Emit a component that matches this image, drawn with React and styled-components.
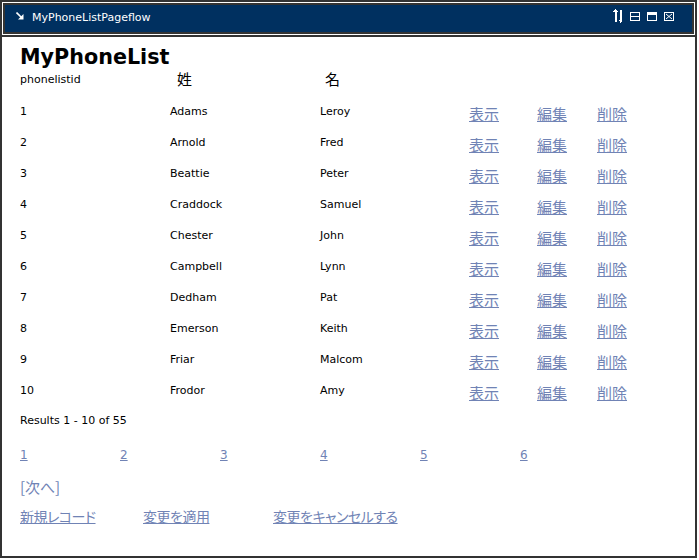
import React from 'react';
import styled, { createGlobalStyle } from 'styled-components';

const LINK = '#7083b5';
const CJK = '"Noto Sans CJK JP", "DejaVu Sans", sans-serif';

const GlobalStyle = createGlobalStyle`
  html, body { margin: 0; padding: 0; background: #fff; }
  body { font-family: "DejaVu Sans", "Noto Sans CJK JP", sans-serif; color: #000; }
`;

const people = [
  [1, 'Adams', 'Leroy'],
  [2, 'Arnold', 'Fred'],
  [3, 'Beattie', 'Peter'],
  [4, 'Craddock', 'Samuel'],
  [5, 'Chester', 'John'],
  [6, 'Campbell', 'Lynn'],
  [7, 'Dedham', 'Pat'],
  [8, 'Emerson', 'Keith'],
  [9, 'Friar', 'Malcom'],
  [10, 'Frodor', 'Amy'],
];

// --- window chrome icons ---
const CornerArrow = () => (
  <svg width="8" height="8" viewBox="0 0 8 8">
    <path d="M0.5 0.5 L5.5 5.5" stroke="#fff" strokeWidth="1.6" />
    <path d="M7.5 2 V7.5 H2 Z" fill="#fff" />
  </svg>
);

const SortIcon = () => (
  <svg width="10" height="14" viewBox="0 0 10 14" shapeRendering="crispEdges">
    <rect x="2" y="2" width="1.5" height="11" fill="#fff" />
    <path d="M0 3 L2.75 0 L5.5 3 Z" fill="#fff" />
    <rect x="7" y="1" width="1.5" height="10" fill="#fff" />
    <path d="M5 10.5 L7.75 14 L10 10.5 Z" fill="#fff" />
  </svg>
);

const MinIcon = () => (
  <svg width="10" height="9" viewBox="0 0 10 9" shapeRendering="crispEdges">
    <rect x="0.5" y="0.5" width="9" height="8" fill="none" stroke="#fff" />
    <line x1="0" y1="4.5" x2="10" y2="4.5" stroke="#fff" />
  </svg>
);

const MaxIcon = () => (
  <svg width="10" height="9" viewBox="0 0 10 9" shapeRendering="crispEdges">
    <rect x="0.5" y="0.5" width="9" height="8" fill="none" stroke="#fff" />
    <rect x="0" y="0" width="10" height="3" fill="#fff" />
  </svg>
);

const CloseIcon = () => (
  <svg width="10" height="9" viewBox="0 0 10 9">
    <rect x="0.5" y="0.5" width="9" height="8" fill="none" stroke="#fff" shapeRendering="crispEdges" />
    <path d="M2 2 L8 7 M8 2 L2 7" stroke="#fff" strokeWidth="1" />
  </svg>
);

export default function App() {
  return (
    <>
      <GlobalStyle />
      <Frame>
        <Header>
          <TitleBar>
            <TitleIcon><CornerArrow /></TitleIcon>
            <TitleText>MyPhoneListPageflow</TitleText>
            <Controls>
              <SortIcon />
              <MinIcon />
              <MaxIcon />
              <CloseIcon />
            </Controls>
          </TitleBar>
        </Header>

        <Content>
          <PageTitle>MyPhoneList</PageTitle>

          <HeadRow>
            <HeadCell>phonelistid</HeadCell>
            <HeadCell $cjk $indent={7}>姓</HeadCell>
            <HeadCell $cjk $indent={5}>名</HeadCell>
          </HeadRow>

          {people.map(([id, last, first]) => (
            <DataRow key={id}>
              <Cell>{id}</Cell>
              <Cell>{last}</Cell>
              <Cell>{first}</Cell>
              <ActionLink href="#">表示</ActionLink>
              <ActionLink href="#">編集</ActionLink>
              <ActionLink href="#">削除</ActionLink>
            </DataRow>
          ))}

          <Results>Results 1 - 10 of 55</Results>

          <Pager>
            {[1, 2, 3, 4, 5, 6].map(n => (
              <PageLink key={n} href="#">{n}</PageLink>
            ))}
          </Pager>

          <NextLink href="#">[次へ]</NextLink>

          <Footer>
            <FooterLink href="#">新規レコード</FooterLink>
            <FooterLink href="#">変更を適用</FooterLink>
            <FooterLink href="#">変更をキャンセルする</FooterLink>
          </Footer>
        </Content>
      </Frame>
    </>
  );
}

// --- STYLED COMPONENTS ---

const Frame = styled.div`
  width: 697px;
  height: 558px;
  box-sizing: border-box;
  border: 2px solid #333;
  background: #fff;
  display: flex;
  flex-direction: column;
`;

const Header = styled.div`
  padding: 1px;
  border-bottom: 2px solid #333;
`;

const TitleBar = styled.div`
  height: 31px;
  box-sizing: border-box;
  border: 2px solid #333;
  background: #003060;
  color: #fff;
  display: flex;
  align-items: center;
  padding: 0 18px 0 11px;
  font-size: 11px;
`;

const TitleIcon = styled.span`
  display: flex;
  margin-bottom: 5px;
`;

const TitleText = styled.span`
  margin-left: 8px;
  margin-bottom: 2px;
  line-height: 13px;
`;

const Controls = styled.div`
  margin-left: auto;
  margin-bottom: 5px;
  display: flex;
  align-items: center;
  gap: 7px;
`;

const Content = styled.div`
  flex: 1;
  padding: 0 18px;
`;

const PageTitle = styled.h1`
  margin: 8px 0 0;
  font-size: 20.7px;
  line-height: 25px;
  font-weight: bold;
  color: #000;
`;

const grid = `
  display: grid;
  grid-template-columns: 150px 150px 149px 68px 60px 1fr;
  white-space: nowrap;
`;

const HeadRow = styled.div`
  ${grid}
  height: 20px;
  line-height: 20px;
  margin-bottom: 6px;
  font-size: 11px;
`;

const HeadCell = styled.div`
  padding-left: ${p => p.$indent || 0}px;
  margin-top: ${p => (p.$cjk ? -1 : 0)}px;
  font-family: ${p => (p.$cjk ? CJK : 'inherit')};
  font-size: ${p => (p.$cjk ? 15 : 11)}px;
`;

const DataRow = styled.div`
  ${grid}
  grid-template-rows: 31px;
  height: 31px;
  line-height: 31px;
  font-size: 11px;
`;

const Cell = styled.div``;

const ActionLink = styled.a`
  margin-top: 2px;
  font-family: ${CJK};
  font-size: 15px;
  color: ${LINK};
  text-decoration: underline;
  justify-self: start;
`;

const Results = styled.div`
  margin-top: 5px;
  line-height: 20px;
  font-size: 11px;
`;

const Pager = styled.div`
  margin-top: 14px;
  display: grid;
  grid-template-columns: repeat(6, 100px);
  line-height: 20px;
  font-size: 12px;
`;

const PageLink = styled.a`
  color: ${LINK};
  text-decoration: underline;
  justify-self: start;
`;

const NextLink = styled.a`
  display: block;
  margin-top: 12px;
  line-height: 20px;
  font-family: ${CJK};
  font-size: 15px;
  color: ${LINK};
  text-decoration: none;
  width: max-content;
`;

const Footer = styled.div`
  margin-top: 9px;
  display: grid;
  grid-template-columns: 123px 130px auto;
  line-height: 20px;
`;

const FooterLink = styled.a`
  font-family: ${CJK};
  font-size: 14px;
  font-feature-settings: "palt";
  letter-spacing: -0.5px;
  color: ${LINK};
  text-decoration: underline;
  justify-self: start;
`;
